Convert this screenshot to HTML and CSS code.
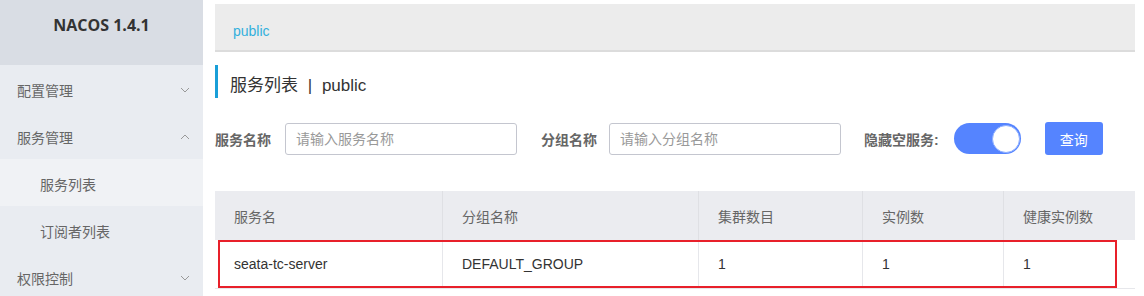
FILE: index.html
```html
<!DOCTYPE html>
<html lang="zh-CN">
<head>
    <meta charset="UTF-8">
    <title>Nacos</title>
    <link rel="stylesheet" href="styles.css">
</head>
<body>
    <div class="sidebar">
        <div class="brand">NACOS 1.4.1</div>
        <div class="menu-item">配置管理
            <svg class="arrow" width="10" height="6" viewBox="0 0 10 6"><path d="M1 1 L5 5 L9 1" fill="none" stroke="#999" stroke-width="1"/></svg>
        </div>
        <div class="menu-item">服务管理
            <svg class="arrow" width="10" height="6" viewBox="0 0 10 6"><path d="M1 5 L5 1 L9 5" fill="none" stroke="#999" stroke-width="1"/></svg>
        </div>
        <div class="menu-item sub active">服务列表</div>
        <div class="menu-item sub">订阅者列表</div>
        <div class="menu-item">权限控制
            <svg class="arrow" width="10" height="6" viewBox="0 0 10 6"><path d="M1 1 L5 5 L9 1" fill="none" stroke="#999" stroke-width="1"/></svg>
        </div>
    </div>
    <div class="main">
        <div class="crumb">public</div>
        <div class="title">服务列表 <span class="sep">|</span> public</div>
        <div class="search">
            <label>服务名称</label>
            <input class="field" placeholder="请输入服务名称">
            <label class="gap">分组名称</label>
            <input class="field" placeholder="请输入分组名称">
            <label class="gap wide">隐藏空服务:</label>
            <div class="switch"><div class="knob"></div></div>
            <button class="query-btn">查询</button>
        </div>
        <table class="services">
            <thead>
                <tr>
                    <th class="c1">服务名</th>
                    <th class="c2">分组名称</th>
                    <th class="c3">集群数目</th>
                    <th class="c4">实例数</th>
                    <th class="c5">健康实例数</th>
                </tr>
            </thead>
            <tbody>
                <tr>
                    <td>seata-tc-server</td>
                    <td>DEFAULT_GROUP</td>
                    <td>1</td>
                    <td>1</td>
                    <td>1</td>
                </tr>
            </tbody>
        </table>
        <div class="highlight"></div>
    </div>
</body>
</html>
```

FILE: styles.css
```css
body {
    margin: 0;
    display: flex;
    font-family: "Liberation Sans", "Noto Sans CJK SC", sans-serif;
    color: #333;
    background-color: #ffffff;
    height: 296px;
    overflow: hidden;
}

.sidebar {
    width: 203px;
    flex-shrink: 0;
    background-color: #e9ecf1;
}

.brand {
    height: 65px;
    line-height: 50px;
    background-color: #d9dde4;
    text-align: center;
    font-family: "Open Sans", "Noto Sans CJK SC", sans-serif;
    font-weight: bold;
    font-size: 16px;
    color: #333;
}

.menu-item {
    height: 47px;
    padding-left: 17px;
    padding-right: 13px;
    padding-top: 2px;
    box-sizing: border-box;
    font-size: 14px;
    color: #666;
    display: flex;
    justify-content: space-between;
    align-items: center;
}

    .menu-item.sub {
        padding-left: 40px;
    }

    .menu-item.active {
        background-color: #f0f2f5;
    }

.main {
    position: relative;
    flex: 1;
    padding: 4px 9px 0 12px;
}

.crumb {
    height: 46px;
    line-height: 54px;
    background-color: #ececec;
    border-bottom: 2px solid #dcdcdc;
    padding-left: 18px;
    font-size: 14px;
    color: #33b0dc;
}

.title {
    margin-top: 13px;
    height: 33px;
    line-height: 42px;
    border-left: 3px solid #199fd8;
    padding-left: 12px;
    font-size: 17px;
    color: #333;
}

    .title .sep {
        margin: 0 5px;
    }

.search {
    margin-top: 24px;
    display: flex;
    align-items: center;
    height: 33px;
}

    .search label {
        font-size: 14px;
        font-weight: bold;
        color: #666;
        margin-right: 14px;
    }

        .search label.gap {
            margin-left: 24px;
            margin-right: 12px;
        }

        .search label.wide {
            margin-left: 23px;
            margin-right: 15px;
        }

.field {
    width: 232px;
    height: 32px;
    box-sizing: border-box;
    border: 1px solid #c4c6cf;
    border-radius: 3px;
    padding: 0 10px;
    font-size: 14px;
    font-family: "Liberation Sans", "Noto Sans CJK SC", sans-serif;
}

    .field::placeholder {
        color: #999;
    }

.switch {
    width: 67px;
    height: 31px;
    border-radius: 16px;
    background-color: #5584ff;
    display: flex;
    justify-content: flex-end;
    align-items: center;
    padding-right: 1px;
    box-sizing: border-box;
}

    .switch .knob {
        width: 28px;
        height: 28px;
        border-radius: 50%;
        background-color: #ffffff;
        border: 1px solid #8fb0ff;
        box-sizing: border-box;
    }

.query-btn {
    margin-left: 24px;
    width: 58px;
    height: 33px;
    border: none;
    border-radius: 3px;
    background-color: #5584ff;
    color: white;
    font-size: 14px;
    font-family: "Liberation Sans", "Noto Sans CJK SC", sans-serif;
}

.services {
    margin-top: 36px;
    width: 920px;
    border-collapse: collapse;
    font-size: 14px;
}

    .services th {
        background-color: #ebecf0;
        font-weight: normal;
        color: #666;
        height: 49px;
        text-align: left;
        padding: 0 0 0 19px;
        border-left: 1px solid #dfe0e4;
    }

    .services td {
        height: 48px;
        padding: 0 0 0 19px;
        border-left: 1px solid #e6e7eb;
        border-bottom: 1px solid #e6e7eb;
        color: #333;
    }

    .services th:first-child, .services td:first-child {
        border-left: none;
    }

    .services .c1 { width: 208px; }
    .services .c2 { width: 236px; }
    .services .c3 { width: 144px; }
    .services .c4 { width: 121px; }

.highlight {
    position: absolute;
    left: 15px;
    top: 240px;
    width: 899px;
    height: 48px;
    box-sizing: border-box;
    border: 2px solid #e8202a;
}
```
